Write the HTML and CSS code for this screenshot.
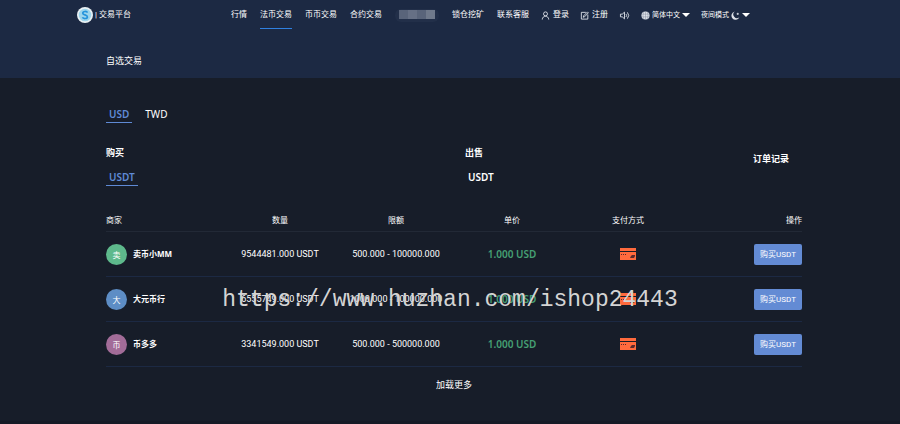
FILE: index.html
```html
<!DOCTYPE html>
<html lang="zh-CN">
<head>
    <meta charset="UTF-8">
    <title>交易平台</title>
    <link rel="stylesheet" href="styles.css">
</head>
<body>

    <!-- 头部 -->
    <header class="header">
        <div class="navbar">
            <a class="logo" href="#">
                <svg viewBox="0 0 16 16">
                    <circle cx="8" cy="8" r="8" fill="#e9f1f4" stroke="none"/>
                    <circle cx="8" cy="8" r="6.3" fill="#9dd5ec" stroke="none"/>
                    <path d="M10.4 5.600C10 4 5.800 4 5.800 6.200c0 2.100 4.600 1.300 4.600 3.700 0 2.200-4.400 2-4.900.4" fill="none" stroke="#2494dc" stroke-width="1.700"/>
                </svg>
                <span>| 交易平台</span>
            </a>
            <nav class="nav">
                <a href="#">行情</a>
                <a href="#" class="active">法币交易</a>
                <a href="#">币币交易</a>
                <a href="#">合约交易</a>
                <a href="#" class="masked" aria-label="更多"><i></i><i></i><i></i><i></i></a>
                <a href="#">锁仓挖矿</a>
                <a href="#">联系客服</a>
            </nav>
            <div class="tools">
                <a href="#" class="user">
                    <svg viewBox="0 0 10 10"><circle cx="5" cy="3.2" r="2.2"/><path d="M1.4 9.5C1.4 4.700 8.600 4.700 8.600 9.500"/></svg>
                    登录
                </a>
                <a href="#" class="user">
                    <svg viewBox="0 0 10 10"><path d="M6.500 1.500H1.500v7.500h7.200V4M3.600 7l.4-1.600L8.300 1l1 1L5 6.500z"/></svg>
                    注册
                </a>
                <button class="sound" aria-label="声音">
                    <svg viewBox="0 0 12 10"><path d="M1.500 3.500h2L6 1.300v7.400L3.500 6.500h-2zM7.700 3.400q1.300 1.600 0 3.200M9.200 1.500q3 3.500 0 7"/></svg>
                </button>
                <button class="lang">
                    <svg viewBox="0 0 10 10"><circle cx="5" cy="5" r="4.500" fill="#dfe3ea" stroke="none"/><path d="M.8 3.500h8.400M.8 6.500h8.400M5 .500v9M3 .900q-1.500 4 0 8.200M7 .900q1.500 4 0 8.200" stroke="#7d8799" stroke-width=".5"/></svg>
                    简体中文
                    <span class="caret"></span>
                </button>
                <button class="mode">
                    夜间模式
                    <svg viewBox="0 0 10 10"><path d="M4.200.600A4.600 4.600 0 1 0 9.300 7 4 4 0 0 1 4.200.600z" fill="#dfe3ea" stroke="none"/><path d="M7.500 2v2.400M6.300 3.200h2.400"/></svg><span class="caret"></span>
                </button>
            </div>
        </div>
        <div class="subnav"><a href="#">自选交易</a></div>
    </header>

    <!-- 主体 -->
    <main class="container">
        <div class="currency">
            <a href="#" class="tab active">USD</a>
            <a href="#" class="tab plain">TWD</a>
        </div>

        <div class="sides">
            <section class="side">
                <h2>购买</h2>
                <a href="#" class="tab active">USDT</a>
            </section>
            <section class="side">
                <h2>出售</h2>
                <a href="#" class="tab">USDT</a>
            </section>
            <a href="#" class="orders">订单记录</a>
        </div>

        <div class="list">
            <table class="merchants">
                <thead>
                    <tr>
                        <th>商家</th>
                        <th>数量</th>
                        <th>限额</th>
                        <th>单价</th>
                        <th>支付方式</th>
                        <th>操作</th>
                    </tr>
                </thead>
                <tbody>
                    <tr>
                        <td><div class="merchant"><span class="avatar green">卖</span>卖币小MM</div></td>
                        <td>9544481.000 USDT</td>
                        <td>500.000 - 100000.000</td>
                        <td class="price">1.000 USD</td>
                        <td><svg class="card" viewBox="0 0 16 12"><path d="M0 0h16v3H0zM0 4h16v8H0z" fill="#ff6a3d"/><path d="M1 6h1v1H1zM3 6h1v1H3zM5 6h1v1H5zM12 7h3v1l-1 2h-4l1-2z" fill="#5a2a2c"/></svg></td>
                        <td><button class="buy">购买USDT</button></td>
                    </tr>
                    <tr>
                        <td><div class="merchant"><span class="avatar blue">大</span>大元币行</div></td>
                        <td>6555749.000 USDT</td>
                        <td>1000.000 - 100000.000</td>
                        <td class="price">1.000 USD</td>
                        <td><svg class="card" viewBox="0 0 16 12"><path d="M0 0h16v3H0zM0 4h16v8H0z" fill="#ff6a3d"/><path d="M1 6h1v1H1zM3 6h1v1H3zM5 6h1v1H5zM12 7h3v1l-1 2h-4l1-2z" fill="#5a2a2c"/></svg></td>
                        <td><button class="buy">购买USDT</button></td>
                    </tr>
                    <tr>
                        <td><div class="merchant"><span class="avatar purple">币</span>币多多</div></td>
                        <td>3341549.000 USDT</td>
                        <td>500.000 - 500000.000</td>
                        <td class="price">1.000 USD</td>
                        <td><svg class="card" viewBox="0 0 16 12"><path d="M0 0h16v3H0zM0 4h16v8H0z" fill="#ff6a3d"/><path d="M1 6h1v1H1zM3 6h1v1H3zM5 6h1v1H5zM12 7h3v1l-1 2h-4l1-2z" fill="#5a2a2c"/></svg></td>
                        <td><button class="buy">购买USDT</button></td>
                    </tr>
                </tbody>
            </table>
            <div class="watermark">https://www.huzhan.com/ishop24443</div>
        </div>

        <button class="more">加载更多</button>
    </main>

    <div class="footer"></div>

</body>
</html>
```
FILE: styles.css
```css
/* 基本样式 */
* {
    box-sizing: border-box;
}

body {
    margin: 0;
    background-color: #171d29;
    color: #fff;
    font-family: Roboto, "Noto Sans CJK SC", sans-serif;
    font-size: 9px;
    line-height: 12px;
}

a {
    color: inherit;
    text-decoration: none;
}

button {
    padding: 0;
    border: none;
    background: none;
    color: inherit;
    font: inherit;
    cursor: pointer;
}

svg {
    display: block;
    flex: none;
    fill: none;
    stroke: #dfe3ea;
    stroke-width: 1;
}

/* 头部 */
.header {
    background-color: #1c2943;
    height: 78px;
}

.navbar {
    display: flex;
    align-items: center;
    height: 30px;
    padding-left: 77px;
    font-size: 8px;
    white-space: nowrap;
}

.logo {
    display: flex;
    align-items: center;
    gap: 2px;
    width: 154px;
}

.logo svg {
    width: 16px;
    height: 16px;
}

.nav {
    display: flex;
    align-items: center;
    gap: 13px;
}

.nav a {
    line-height: 26px;
    border-bottom: 1px solid transparent;
}

.nav .active {
    border-bottom-color: #2f80e0;
}

.nav .masked {
    display: flex;
    height: 13px;
    padding: 1px 4px;
    border: none;
    border-radius: 6px;
    background-color: #222f49;
}

.masked i {
    width: 9px;
    height: 9px;
    background-color: #59647a;
}

.masked i:nth-child(2) {
    background-color: #667085;
}

.masked i:nth-child(4) {
    background-color: #6f798b;
}

.tools {
    display: flex;
    align-items: center;
    gap: 11px;
    margin-left: 12px;
}

.tools a,
.tools button {
    display: flex;
    align-items: center;
    gap: 2px;
}

.tools svg {
    width: 9px;
    height: 9px;
}

.tools .user {
    gap: 3px;
    font-size: 8px;
}

.tools .sound svg {
    width: 11px;
}

.tools .lang,
.tools .mode {
    font-size: 7px;
}

.caret {
    border: 4px solid transparent;
    border-top-color: #fff;
    border-bottom: none;
}

.subnav {
    padding: 25px 106px 0;
}

/* 主体 */
.container {
    padding: 29px 98px 30px 106px;
}

.currency {
    display: flex;
    gap: 10px;
}

.tab {
    display: inline-block;
    padding: 0 3px;
    border-bottom: 1px solid transparent;
    font-family: "Noto Sans", sans-serif;
    font-size: 10px;
    font-weight: 600;
    line-height: 15px;
}

.tab.active {
    color: #5f8ad5;
    border-bottom-color: #5f8ad5;
}

.tab.plain {
    font-weight: 400;
}

.sides {
    display: grid;
    grid-template-columns: 359fr 288fr 49fr;
    margin-top: 24px;
}

.side h2 {
    margin: 0 0 11px;
    font-size: 9px;
    line-height: 12px;
}

.orders {
    padding-top: 6px;
    font-weight: bold;
}

/* 商家列表 */
.list {
    position: relative;
    margin-top: 24px;
}

.merchants {
    width: 100%;
    table-layout: fixed;
    border-collapse: separate;
    border-spacing: 0;
    text-align: center;
    white-space: nowrap;
}

.merchants th {
    height: 22px;
    padding: 0;
    border-bottom: 1px solid #222936;
    font-size: 8px;
    font-weight: 400;
}

.merchants td {
    height: 45px;
    padding: 0;
    border-bottom: 1px solid #1c2943;
}

.merchants th:first-child {
    text-align: left;
}

.merchants th:last-child,
.merchants td:last-child {
    text-align: right;
}

.merchant {
    display: flex;
    align-items: center;
    gap: 6px;
    font-family: "Noto Sans", "Noto Sans CJK SC", sans-serif;
    font-size: 8px;
    font-weight: bold;
}

.avatar {
    width: 21px;
    border-radius: 50%;
    font-weight: 400;
    line-height: 21px;
    text-align: center;
}

.green {
    background-color: #5eb98c;
}

.blue {
    background-color: #5d8dc5;
}

.purple {
    background-color: #a26c98;
}

.merchants .price {
    color: #45a074;
    font-family: "Noto Sans", sans-serif;
    font-size: 10px;
    font-weight: 600;
}

.card {
    width: 16px;
    height: 12px;
    margin: 0 auto;
    stroke: none;
}

.buy {
    width: 48px;
    border-radius: 2px;
    background-color: #638bd4;
    font-size: 8px;
    line-height: 21px;
}

/* 水印 */
.watermark {
    position: absolute;
    top: 90px;
    left: 0;
    right: 8px;
    color: #d4d4d4;
    font-family: "Liberation Mono", monospace;
    font-size: 23px;
    line-height: 0;
    text-align: center;
    pointer-events: none;
}

.more {
    display: block;
    margin: 12px auto 0;
    line-height: 12px;
}

.footer {
    height: 4px;
    background-color: #151a26;
}
```
